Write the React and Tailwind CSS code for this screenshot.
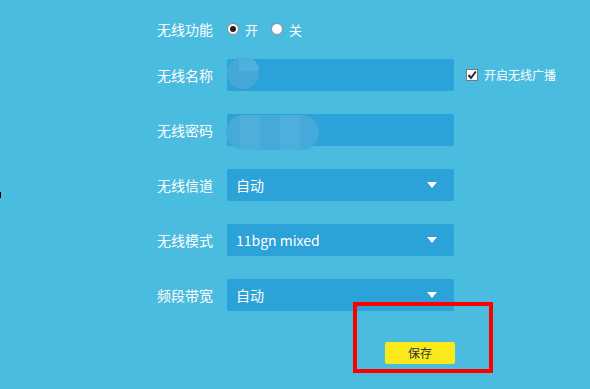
import React from "react";

const font = { fontFamily: '"Noto Sans CJK SC", "Noto Sans", sans-serif' };

function Radio({ checked, label }) {
  return (
    <span className="flex items-center">
      <span className="w-[12px] h-[12px] rounded-full bg-white border border-[#8a8a8a] flex items-center justify-center">
        {checked && <span className="w-[6px] h-[6px] rounded-full bg-[#222]" />}
      </span>
      <span className="ml-[6px] text-[13px] text-white leading-none">{label}</span>
    </span>
  );
}

function Caret() {
  return (
    <svg width="10" height="6" viewBox="0 0 10 6" className="shrink-0">
      <path d="M0 0 H10 L5 6 Z" fill="#fff" />
    </svg>
  );
}

function Row({ label, children, extra }) {
  return (
    <div className="flex items-center h-[32px]">
      <div className="w-[70px] text-[14px] text-white leading-none">{label}</div>
      {children}
      {extra}
    </div>
  );
}

function Field({ children }) {
  return (
    <div className="relative w-[227px] h-[32px] rounded-[2px] bg-[#2ba2d8] flex items-center px-[9px] text-[14px] text-white">
      {children}
    </div>
  );
}

function Select({ value }) {
  return (
    <Field>
      <span className="flex-1 leading-none">{value}</span>
      <span className="mr-[8px] flex"><Caret /></span>
    </Field>
  );
}

export default function App() {
  return (
    <div className="relative w-[590px] h-[389px] overflow-hidden bg-[#4abce0]" style={font}>
      <span className="absolute left-0 top-[192px] w-[1px] h-[6px] bg-black" />

      <div className="pl-[157px] pt-[19px] flex flex-col">
        <div className="flex items-center h-[20px]">
          <div className="w-[70px] text-[14px] text-white leading-none">无线功能</div>
          <div className="flex items-center gap-[13px]">
            <Radio checked label="开" />
            <Radio label="关" />
          </div>
        </div>

        <div className="mt-[20px] flex flex-col gap-[23px]">
          <Row
            label="无线名称"
            extra={
              <div className="ml-[12px] flex items-center">
                <span className="w-[12px] h-[12px] bg-white border border-[#7a7a7a] flex items-center justify-center">
                  <svg width="10" height="10" viewBox="0 0 10 10">
                    <path d="M1.5 5 L4 8 L8.8 1.5" fill="none" stroke="#1a2a40" strokeWidth="2" />
                  </svg>
                </span>
                <span className="ml-[6px] text-[12px] text-white leading-none">开启无线广播</span>
              </div>
            }
          >
            <Field>
              <span className="absolute left-0 top-[-2px] w-[32px] h-[32px] rounded-full bg-[#45a8d8]" />
              <span className="absolute left-[12px] top-[-2px] w-[20px] h-[14px] rounded-tr-full bg-[#4fb0dd]" />
            </Field>
          </Row>

          <Row label="无线密码">
            <Field>
              <span className="absolute left-[-1px] top-[1px] w-[93px] h-[35px] rounded-full bg-[#45a9d9]" />
              <span className="absolute left-[13px] top-[1px] w-[20px] h-[35px] bg-[#4eafdc]" />
              <span className="absolute left-[53px] top-[1px] w-[20px] h-[35px] bg-[#4eafdc]" />
            </Field>
          </Row>

          <Row label="无线信道">
            <Select value="自动" />
          </Row>

          <Row label="无线模式">
            <Select value="11bgn mixed" />
          </Row>

          <Row label="频段带宽">
            <Select value="自动" />
          </Row>
        </div>

        <div className="mt-[28px] pl-[228px]">
          <button className="w-[70px] h-[22px] rounded-[2px] bg-[#fbe91c] text-[12px] text-[#333] leading-none">
            保存
          </button>
        </div>
      </div>

      <div className="absolute left-[353px] top-[302px] w-[140px] h-[71px] border-[4px] border-[#ff0000]" />
    </div>
  );
}
